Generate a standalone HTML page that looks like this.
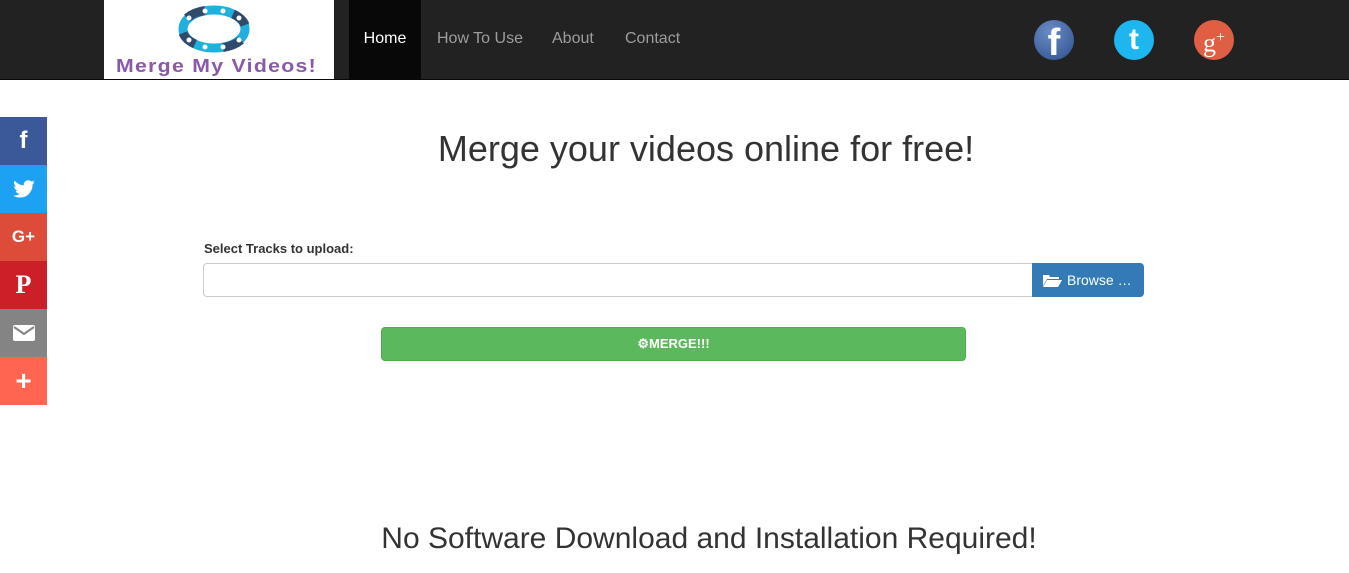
<!DOCTYPE html>
<html><head><style>
body{margin:0;width:1349px;height:573px;overflow:hidden;background:#fff;font-family:"Liberation Sans",Arial,sans-serif;position:relative}
.nav{position:absolute;left:0;top:0;width:1349px;height:79px;background:#222;border-bottom:1px solid #080808}
.logo{position:absolute;left:104px;top:0;width:230px;height:79px;background:#fff}
.logo .t{position:absolute;left:12px;top:56px;font-weight:bold;font-size:18px;color:#8a5aa8;letter-spacing:1.1px;transform:scaleX(1.18);transform-origin:left}
.nav a{position:absolute;top:0;height:79px;line-height:78px;font-size:16px;color:#9d9d9d;text-decoration:none}
.home{left:349px;width:72px;background:#080808;color:#fff!important;text-align:center}
.side div{position:absolute;left:0;width:47px;height:48px;display:flex;align-items:center;justify-content:center;color:#fff;font-weight:bold}
h1{position:absolute;left:0;width:1412px;top:128px;margin:0;text-align:center;font-weight:normal;font-size:36px;color:#333}
h2{position:absolute;left:0;width:1418px;top:522px;margin:0;text-align:center;font-weight:normal;font-size:30px;color:#333}
.lbl{position:absolute;left:204px;top:241px;font-size:13px;font-weight:bold;color:#333}
.inp{position:absolute;left:203px;top:263px;width:828px;height:32px;border:1px solid #ccc;border-radius:4px 0 0 4px}
.br{position:absolute;left:1032px;top:263px;width:112px;height:34px;background:#337ab7;border-radius:0 4px 4px 0;color:#fff;font-size:14px;line-height:34px}
.mg{position:absolute;left:381px;top:327px;width:583px;height:32px;background:#5cb85c;border:1px solid #4cae4c;border-radius:4px;color:#fff;font-size:13px;font-weight:bold;text-align:center;line-height:32px}
.c{position:absolute;top:20px;width:40px;height:40px;border-radius:50%;color:#fff;text-align:center}
</style></head><body>
<div class="nav">
<div class="logo">
<svg style="position:absolute;left:70px;top:3px" width="80" height="52" viewBox="0 0 80 52">
<ellipse cx="40" cy="26" rx="31" ry="19" fill="none" stroke="#1fb0e0" stroke-width="9"/>
<path d="M13 15 A31 19 0 0 1 31 7.5 M49 44.5 A31 19 0 0 0 67 37 M9 30 A31 19 0 0 0 21 41 M59 11 A31 19 0 0 1 71 22" fill="none" stroke="#2f4a6b" stroke-width="9"/>
<g fill="#fff"><circle cx="15" cy="15" r="2.5"/><circle cx="31" cy="8" r="2.5"/><circle cx="49" cy="8" r="2.5"/><circle cx="65" cy="15" r="2.5"/><circle cx="65" cy="37" r="2.5"/><circle cx="49" cy="44" r="2.5"/><circle cx="31" cy="44" r="2.5"/><circle cx="15" cy="37" r="2.5"/></g>
</svg>
<div class="t">Merge My Videos!</div></div>
<a class="home">Home</a>
<a style="left:437px">How To Use</a>
<a style="left:552px">About</a>
<a style="left:625px">Contact</a>
<div class="c" style="left:1034px;background:radial-gradient(circle at 40% 30%,#6b8cc4,#2d4f8e);font-size:38px;font-weight:bold;line-height:46px">f</div>
<div class="c" style="left:1114px;background:#1eb6ee;font-size:30px;font-weight:bold;line-height:40px">t</div>
<div class="c" style="left:1194px;background:#e05e44;font-family:'Liberation Serif',serif;font-size:26px;line-height:36px">g<sup style="font-size:16px">+</sup></div>
</div>
<div class="side">
<div style="top:117px;background:#3b5998;font-size:24px">f</div>
<div style="top:165px;background:#1da1f2"><svg width="22" height="18" viewBox="0 0 24 20"><path d="M24 2.4a10 10 0 0 1-2.8.8A5 5 0 0 0 23.3.5a10 10 0 0 1-3.1 1.2A5 5 0 0 0 11.8 6 14 14 0 0 1 1.7.9a5 5 0 0 0 1.5 6.6A5 5 0 0 1 1 6.9a5 5 0 0 0 3.9 4.9 5 5 0 0 1-2.2.1 5 5 0 0 0 4.6 3.4A10 10 0 0 1 0 17.3 14 14 0 0 0 7.5 19.5c9 0 14-7.5 14-14v-.6A10 10 0 0 0 24 2.4z" fill="#fff"/></svg></div>
<div style="top:213px;background:#dd4b39;font-size:17px">G+</div>
<div style="top:261px;background:#cb2027;font-size:26px;font-family:'Liberation Serif',serif">P</div>
<div style="top:309px;background:#848484"><svg width="22" height="16"><rect width="22" height="16" rx="2" fill="#fff"/><path d="M1 2l10 7 10-7" fill="none" stroke="#848484" stroke-width="2"/></svg></div>
<div style="top:357px;background:#ff6550;font-size:28px">+</div>
</div>
<h1>Merge your videos online for free!</h1>
<div class="lbl">Select Tracks to upload:</div>
<div class="inp"></div>
<div class="br"><svg style="position:absolute;left:11px;top:11px" width="19" height="13" viewBox="0 0 19 13"><path d="M0 1h6l1 2h9v2H4L0 12z M4 6h15l-4 7H0z" fill="#fff"/></svg><span style="position:absolute;left:35px">Browse …</span></div>
<div class="mg">⚙MERGE!!!</div>
<h2>No Software Download and Installation Required!</h2>
</body></html>
